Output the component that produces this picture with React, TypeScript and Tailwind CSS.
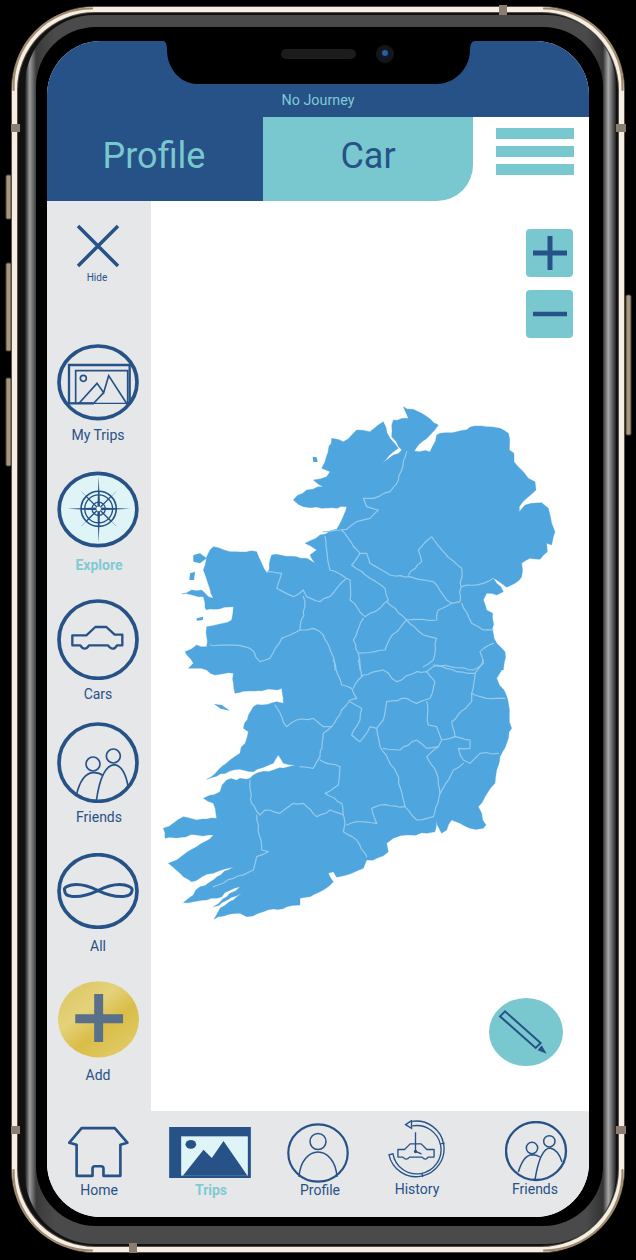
import React from "react";

const NAVY = "#265287";

type P = [number, number];

let seed = 7;
const rnd = () => {
  seed = (seed * 16807) % 2147483647;
  return seed / 2147483647 - 0.5;
};
const rough = (pts: P[], amp: number, step: number): P[] => {
  const out: P[] = [];
  for (let i = 0; i < pts.length; i++) {
    const a = pts[i];
    const b = pts[i + 1];
    out.push(a);
    if (!b) break;
    const len = Math.hypot(b[0] - a[0], b[1] - a[1]);
    const n = Math.floor(len / step);
    for (let k = 1; k < n; k++) {
      const t = k / n;
      out.push([a[0] + (b[0] - a[0]) * t + rnd() * amp, a[1] + (b[1] - a[1]) * t + rnd() * amp]);
    }
  }
  return out;
};
const dShift = (pts: P[], dy: number) => pts.map(([x, y]) => `${x.toFixed(1)} ${(y + dy).toFixed(1)}`);
const poly = (pts: P[], dy = 0, close = false) =>
  "M" + dShift(pts, dy).join(" L") + (close ? " Z" : "");

const outlineTop: P[] = [
  [760,20],[790,28],[815,40],[865,75],[840,105],[805,135],[793,153],[840,155],[860,105],[870,100],[920,95],[975,78],[1010,80],[1050,85],[1075,100],[1078,150],[1092,160],[1092,185],[1120,215],[1135,235],[1155,245],[1158,270],[1130,295],[1108,320],[1108,335],[1125,315],[1175,308],[1195,325],[1205,370],[1215,395],[1205,435],[1190,430],[1192,455],[1170,478],[1140,475],[1115,490],[1115,530],[1095,550],[1070,562],[1040,540],[1030,535],[1060,575],[1040,585],[1010,580],[1000,600],[1010,630],[1028,640],[1030,700],[1040,730],[1065,755],[1060,810],
];
const outlineBottom: P[] = [
  [1055,30],[1040,55],[1062,90],[1075,130],[1078,170],[1085,205],[1070,250],[1050,290],[1040,330],[1035,370],[1005,410],[985,440],[995,460],[1008,495],[1000,505],[960,505],[930,490],[905,480],[890,510],[875,520],[860,480],[855,515],[830,520],[770,525],[730,535],[710,550],[715,575],[680,595],[650,600],[640,625],[590,645],[560,652],[550,635],[535,640],[550,665],[520,690],[480,710],[450,715],[450,735],[410,740],[340,755],[290,770],[270,760],[205,770],[192,778],[210,745],[250,720],[275,700],[190,740],[240,700],[270,680],[200,715],[130,725],[100,728],[130,705],[150,680],[190,660],[250,620],[190,640],[125,665],[90,640],[55,610],[80,600],[100,585],[190,525],[140,525],[45,535],[40,505],[100,470],[140,480],[200,475],[190,430],[160,415],[210,395],[230,360],[300,355],[310,345],[370,330],[435,315],[400,310],[385,285],[370,310],[310,335],[250,330],[170,358],[240,300],[270,280],[295,215],[280,205],[310,140],[380,125],[400,130],[395,85],[255,100],[250,40],[195,45],[170,30],[115,25],[130,10],
];
const outlineTop2: P[] = [
  [105,755],[140,735],[170,740],[170,680],[245,660],[250,620],[190,628],[165,625],[160,590],[95,582],[125,570],[155,570],[175,590],[190,595],[160,510],[170,470],[180,450],[190,440],[240,455],[320,455],[335,490],[352,520],[365,465],[440,470],[470,475],[495,490],[480,465],[500,450],[465,430],[510,405],[560,388],[590,320],[515,325],[460,320],[430,300],[470,270],[520,260],[490,240],[530,230],[540,215],[515,205],[525,185],[545,115],[580,125],[620,90],[660,95],[700,65],[720,115],[745,145],[695,190],[730,165],[755,150],[725,110],[730,60],[775,55],
];
const outline = poly(
  rough([...outlineTop, ...outlineBottom.map(([x, y]): P => [x, y + 780]), ...outlineTop2], 7, 14),
  0,
  true,
);

const islands: P[][] = [
  [[130,465],[150,460],[170,475],[150,490],[130,485]],
  [[120,520],[135,515],[132,540],[118,540]],
  [[165,600],[192,598],[190,625],[168,630]],
  [[488,170],[500,172],[503,186],[490,186]],
  [[140,655],[160,650],[158,660],[140,662]],
  [[192,912],[215,915],[240,932],[212,926]],
];

const linesTop: P[][] = [
  [[770,155],[745,240],[720,275],[670,295],[640,295],[650,320],[685,330],[660,355],[620,365],[590,388],[570,390],[520,395]],
  [[575,390],[630,460],[605,495],[660,535],[705,565],[715,600],[690,625],[645,650],[600,600],[600,540],[575,525],[540,510],[525,410]],
  [[630,460],[650,460],[660,490],[720,525],[780,530],[850,545],[890,600],[905,610],[930,605],[935,505],[885,460],[845,410],[805,450],[815,485],[775,525]],
  [[935,560],[1000,550],[1030,535]],
  [[935,610],[965,670],[1000,690],[1030,690]],
  [[905,610],[865,630],[860,660],[770,660],[710,605]],
  [[770,660],[720,715],[705,750],[625,760],[610,720],[640,655]],
  [[770,660],[820,705],[860,715],[850,780],[820,800]],
  [[625,760],[630,810]],
  [[590,535],[540,590],[510,605],[470,590],[460,570],[430,590],[380,565],[395,520],[352,515]],
  [[460,590],[465,620],[450,690],[395,715],[360,775],[330,785],[300,745],[250,735],[180,735]],
  [[450,690],[490,685],[520,705],[550,770],[555,810]],
  [[1030,730],[990,755],[1000,790],[970,810],[900,800],[850,795]],
];
const linesBottom: P[][] = [
  [[550,0],[575,75],[605,85],[620,115],[600,120],[575,150],[545,200],[520,220],[510,290],[490,325],[450,320]],
  [[375,135],[410,200],[440,180],[490,175],[520,200],[545,200]],
  [[610,85],[625,60],[640,45],[700,30],[740,65],[800,35],[830,35],[855,65],[840,115],[800,130],[770,115],[710,125],[700,180],[680,205],[660,200],[630,245],[605,225],[630,180],[635,145],[600,125]],
  [[625,0],[635,50]],
  [[830,35],[860,15],[920,35],[975,40],[1000,0]],
  [[975,40],[965,100],[965,125],[905,185],[915,230],[875,240],[860,200],[835,195],[830,125]],
  [[965,100],[1010,115],[1065,115]],
  [[915,230],[960,240],[960,265],[925,265],[940,300],[960,310],[990,280],[1045,280]],
  [[680,205],[690,260],[740,340],[765,440],[800,480],[850,470],[870,400],[910,330],[940,310]],
  [[700,265],[750,270],[800,240],[830,265],[865,260],[875,240]],
  [[865,260],[830,290],[860,340],[870,400]],
  [[510,300],[570,320],[565,375],[525,400],[575,430],[585,490],[580,515],[620,540],[650,590]],
  [[300,360],[305,430],[330,465],[345,450],[390,460],[430,430],[460,430],[500,470],[540,450],[580,465]],
  [[320,465],[335,570],[355,575],[320,590],[310,630],[250,655],[190,680]],
  [[590,495],[620,485],[680,490],[665,445],[690,435],[765,440]],
];
const countyPaths = [
  ...linesTop.map((p) => poly(rough(p, 5, 14))),
  ...linesBottom.map((p) => poly(rough(p, 5, 14), 780)),
];

function IrelandMap() {
  return (
    <svg viewBox="0 0 1260 1590" width={420} height={530} className="absolute left-[-1px] top-[199px]">
      <path d={outline} fill="#4fa5dd" stroke="#4fa5dd" strokeWidth={1} strokeLinejoin="round" />
      {islands.map((p, i) => (
        <path key={i} d={poly(p, 0, true)} fill="#4fa5dd" />
      ))}
      <g fill="none" stroke="#95cbec" strokeWidth={3.6} strokeLinejoin="round" strokeLinecap="round">
        {countyPaths.map((d, i) => (
          <path key={i} d={d} />
        ))}
      </g>
    </svg>
  );
}

function PhoneFrame() {
  const marks: [number, number, number, number][] = [
    [11, 124, 9, 8], [616, 124, 10, 8], [11, 1126, 9, 8], [616, 1126, 10, 8], [499, 5, 8, 10], [129, 1243, 8, 10],
  ];
  const btns: [number, number, number, number][] = [
    [6, 175, 5, 44], [6, 263, 5, 88], [6, 378, 5, 88], [626, 295, 5, 140],
  ];
  return (
    <svg width={636} height={1260} viewBox="0 0 636 1260" className="absolute left-0 top-0">
      <defs>
        <linearGradient id="bandH" x1="0" y1="0" x2="1" y2="0">
          <stop offset="0" stopColor="#1a1a1a" />
          <stop offset="0.008" stopColor="#9a9a9a" />
          <stop offset="0.019" stopColor="#3a3a3a" />
          <stop offset="0.05" stopColor="#4a4a4a" />
          <stop offset="0.95" stopColor="#4a4a4a" />
          <stop offset="0.978" stopColor="#333333" />
          <stop offset="0.987" stopColor="#a8a8a8" />
          <stop offset="1" stopColor="#222222" />
        </linearGradient>
      </defs>
      {btns.map(([x, y, w, h], i) => (
        <rect key={i} x={x} y={y} width={w} height={h} rx={1.5} fill="#a8977f" stroke="#4a4136" strokeWidth={1} />
      ))}
      <rect x={11} y={6} width={614} height={1247} rx={84} fill="#5a4f42" />
      <rect x={14.5} y={9.5} width={607} height={1240} rx={80.5} fill="none" stroke="#f4eee4" strokeWidth={5} />
      <g fill="none" stroke="#a08a6e" strokeWidth={2.2} strokeLinecap="round">
        <path d="M13.5 90 A78 78 0 0 1 92 8.5" />
        <path d="M544 8.5 A78 78 0 0 1 622.5 90" />
        <path d="M622.5 1170 A78 78 0 0 1 544 1250.5" />
        <path d="M92 1250.5 A78 78 0 0 1 13.5 1170" />
      </g>
      <rect x={18} y={13} width={600} height={1233} rx={77} fill="#111" />
      <rect x={25} y={15} width={591} height={1229} rx={70} fill="url(#bandH)" />
      <rect x={36} y={27} width={567} height={1199} rx={60} fill="#000" />
      {marks.map(([x, y, w, h], i) => (
        <rect key={i} x={x} y={y} width={w} height={h} fill="#8b7d6f" />
      ))}
    </svg>
  );
}

function Notch() {
  return (
    <svg width={330} height={46} viewBox="0 0 330 46" className="absolute left-[106px] top-0">
      <path d="M10 0 Q14 0 14 9 C14 28 28 43 44 43 H284 C301 43 317 28 317 9 Q317 0 322 0 Z" fill="#000" />
      <rect x={128} y={8} width={75} height={10} rx={5} fill="#1c1c1c" />
      <circle cx={232} cy={13} r={9} fill="#14161c" />
      <circle cx={232} cy={13} r={5} fill="#0d1a2e" />
      <circle cx={232} cy={12} r={3} fill="#2c5c9a" />
    </svg>
  );
}

const thin = { fill: "none", stroke: NAVY };

function MyTripsIcon() {
  return (
    <svg width={82} height={77} viewBox="52 42 246 231">
      <ellipse cx={175} cy={157} rx={117} ry={109} {...thin} strokeWidth={11} />
      <g {...thin} strokeWidth={5}>
        <path d="M88 222 V105 H270 V222" strokeWidth={7} />
        <path d="M108 222 V122 H264 V222" />
        <circle cx={131} cy={145} r={9} />
        <path d="M116 222 L172 160 L192 188 L207 137 L262 222" />
        <path d="M160 222 L192 188" />
        <path d="M90 220 H162" strokeWidth={7} />
        <path d="M100 220 H270" strokeWidth={4} />
      </g>
    </svg>
  );
}

function ExploreIcon() {
  const spokes = [0, 45, 90, 135];
  return (
    <svg width={82} height={77} viewBox="52 424 246 232">
      <ellipse cx={175} cy={540} rx={117} ry={109} fill="#dff4f6" stroke={NAVY} strokeWidth={11} />
      <g fill={NAVY}>
        <path d="M177 440 L181 534 L272 538 L181 542 L177 640 L173 542 L82 538 L173 534 Z" />
      </g>
      <g stroke="#7c9fc0" strokeWidth={2}>
        <path d="M125 486 L230 590 M230 486 L125 590" />
      </g>
      <g {...thin} strokeWidth={4}>
        <circle cx={177} cy={538} r={53} strokeWidth={5} />
        <circle cx={177} cy={538} r={42} />
        <circle cx={177} cy={538} r={20} />
        {spokes.map((a) => (
          <path key={a} d="M177 485 V591" transform={`rotate(${a} 177 538)`} />
        ))}
      </g>
      <circle cx={177} cy={538} r={7} fill="#fff" />
    </svg>
  );
}

function CarsIcon() {
  return (
    <svg width={82} height={81} viewBox="52 806 246 243">
      <ellipse cx={175} cy={928} rx={117} ry={116} {...thin} strokeWidth={11} />
      <path d="M98 945 V915 H140 L167 890 H200 L225 913 H248 V945 H232 Q220 965 205 945 H148 Q135 965 122 945 Z" {...thin} strokeWidth={7} strokeLinejoin="round" />
    </svg>
  );
}

function FriendsBig() {
  return (
    <svg width={82} height={81} viewBox="52 35 246 243">
      <ellipse cx={175} cy={157} rx={117} ry={116} {...thin} strokeWidth={11} />
      <g {...thin} strokeWidth={5}>
        <circle cx={160} cy={161} r={21} />
        <circle cx={221} cy={137} r={21} />
        <path d="M110 255 Q125 190 160 187 Q178 186 190 196" />
        <path d="M170 272 Q185 165 225 163 Q255 168 266 232" />
      </g>
    </svg>
  );
}

function AllIcon() {
  return (
    <svg width={82} height={76} viewBox="52 428 246 228">
      <ellipse cx={175} cy={542} rx={117} ry={109} {...thin} strokeWidth={11} />
      <path d="M175 541 Q130 518 95 524 Q70 530 75 541 Q75 555 95 558 Q130 562 175 541 Q220 518 255 524 Q280 530 277 541 Q275 555 255 558 Q220 562 175 541 Z" {...thin} strokeWidth={9} />
    </svg>
  );
}

function AddIcon() {
  return (
    <svg width={81} height={77} viewBox="53 813 244 231">
      <defs>
        <linearGradient id="addGold" x1="0.1" y1="0" x2="0.9" y2="1">
          <stop offset="0" stopColor="#dcc660" />
          <stop offset="0.35" stopColor="#e4d27a" />
          <stop offset="0.6" stopColor="#dabd48" />
          <stop offset="1" stopColor="#e2ce6e" />
        </linearGradient>
      </defs>
      <ellipse cx={175} cy={928} rx={122} ry={115} fill="url(#addGold)" />
      <path d="M162 852 H189 V913 H249 V940 H189 V996 H162 V940 H105 V913 H162 Z" fill="#5a6f89" />
    </svg>
  );
}

function HomeIcon() {
  return (
    <svg width={61} height={52} viewBox="84 80 184 156" className="mr-[2px]">
      <path d="M88 130 L125 86 H225 L263 130 L242 136 V230 H191 V208 Q191 201 184 201 H165 Q158 201 158 208 V230 H110 V136 Z" {...thin} strokeWidth={8} strokeLinejoin="round" />
    </svg>
  );
}

function TripsIcon() {
  return (
    <svg width={82} height={51} viewBox="387 82 245 153" className="mr-[2px]">
      <rect x={387} y={82} width={245} height={153} fill={NAVY} />
      <rect x={423} y={110} width={200} height={118} fill="#dff4f6" />
      <ellipse cx={452} cy={134} rx={16} ry={13} fill={NAVY} />
      <path d="M428 228 L490 150 L515 175 L550 124 L622 228 Z" fill={NAVY} />
    </svg>
  );
}

function ProfileIcon() {
  return (
    <svg width={62} height={60} viewBox="0 0 62 60" className="mb-[-3px] mr-[4px]">
      <ellipse cx={31} cy={30} rx={29.7} ry={28.7} {...thin} strokeWidth={2.2} />
      <circle cx={31} cy={18.5} r={8} {...thin} strokeWidth={1.5} />
      <path d="M12 54 C13 38 22 29 31 29 C40 29 49 38 50 54" {...thin} strokeWidth={1.5} />
    </svg>
  );
}

function HistoryIcon() {
  return (
    <svg width={58} height={58} viewBox="145 418 175 175" className="mb-px">
      <g {...thin} strokeWidth={4}>
        <path d="M218 422 A84 84 0 1 1 148 523 L160 520 A73 73 0 1 0 218 436" />
        <path d="M303 490 L316 488 M247 578 L250 590" />
        <path d="M175 530 V507 H195 L212 490 H245 L262 507 H284 V530 H266 Q258 542 248 530 H210 Q200 542 190 530 Z" strokeLinejoin="round" />
        <path d="M228 455 V513" />
        <path d="M228 513 L246 520" />
      </g>
      <path d="M198 432 L216 420 L216 443 Z" fill="#e6e7e9" stroke={NAVY} strokeWidth={4} />
      <circle cx={228} cy={513} r={5} fill={NAVY} />
    </svg>
  );
}

function FriendsSmall() {
  return (
    <svg width={63} height={61} viewBox="495 422 189 183" className="mb-[-3px] ml-[2px]">
      <ellipse cx={588} cy={512} rx={90} ry={87} {...thin} strokeWidth={7} />
      <g {...thin} strokeWidth={4.5}>
        <circle cx={576} cy={503} r={17} />
        <circle cx={628} cy={483} r={17} />
        <path d="M535 575 Q550 525 575 523 Q590 523 600 530" />
        <path d="M585 598 Q600 505 630 503 Q655 508 666 545" />
      </g>
    </svg>
  );
}

function PencilIcon() {
  return (
    <svg width={74} height={69} viewBox="447 55 222 207" className="absolute left-[338px] top-[797px]">
      <ellipse cx={558} cy={157} rx={111} ry={102} fill="#79c8cf" />
      <path d="M495 95 L480 110 L587 205 L602 190 Z" {...thin} strokeWidth={6} />
      <path d="M605 197 L620 222 L593 212 Z" fill={NAVY} />
    </svg>
  );
}

function SideItem({ icon, label, active, className }: { icon: React.ReactNode; label: string; active?: boolean; className: string }) {
  return (
    <div className="flex flex-col items-center">
      {icon}
      <div className={`${className} text-[14px] leading-5 ${active ? "font-bold text-[#7fcbd3]" : "text-[#265287]"}`}>{label}</div>
    </div>
  );
}

function NavItem({ icon, label, active, className }: { icon: React.ReactNode; label: string; active?: boolean; className: string }) {
  return (
    <div className={`flex flex-col items-center justify-end ${className}`}>
      {icon}
      <div className={`text-[14px] leading-5 ${active ? "font-bold text-[#7fcbd3]" : "text-[#265287]"}`}>{label}</div>
    </div>
  );
}

export default function App() {
  return (
    <div className="relative h-[1260px] w-[636px] overflow-hidden bg-black font-['Roboto',sans-serif]">
      <PhoneFrame />
      <div className="relative ml-[47px] w-[542px] pt-[41px]">
        <div className="relative flex h-[1176px] flex-col overflow-hidden rounded-[54px] bg-white">
          <div className="flex h-[76px] items-end justify-center bg-[#265287] pb-[7px]">
            <span className="text-[14.3px] leading-5 text-[#7fcbd3]">No Journey</span>
          </div>
          <div className="flex h-[84px]">
            <div className="flex w-[216px] items-center justify-center bg-[#265287] pb-[6px] pr-[2px] text-[36px] text-[#79c8cf]">Profile</div>
            <div className="flex w-[210px] items-center justify-center rounded-br-[36px] bg-[#79c8cf] pb-[6px] text-[36px] text-[#265287]">Car</div>
            <div className="ml-[23px] mt-[11px] flex w-[78px] flex-col gap-[7px]">
              <div className="h-[11px] bg-[#79c8cf]" />
              <div className="h-[11px] bg-[#79c8cf]" />
              <div className="h-[11px] bg-[#79c8cf]" />
            </div>
          </div>
          <div className="flex h-[910px]">
            <div className="flex w-[104px] flex-col bg-[#e6e7e9] pr-[2px] pt-[23px]">
              <div className="flex flex-col items-center">
                <svg width={44} height={44} viewBox="0 0 44 44">
                  <path d="M2 2 L42 42 M42 2 L2 42" stroke={NAVY} strokeWidth={3.5} />
                </svg>
                <div className="mr-[2px] mt-[3px] text-[10px] leading-[14px] text-[#265287]">Hide</div>
              </div>
              <div className="mt-[59px]">
                <SideItem icon={<MyTripsIcon />} label="My Trips" className="mt-[4px]" />
              </div>
              <div className="mt-[26px]">
                <SideItem icon={<ExploreIcon />} label="Explore" active className="ml-[2px] mt-[7px]" />
              </div>
              <div className="mt-[24px]">
                <SideItem icon={<CarsIcon />} label="Cars" className="mt-[4px]" />
              </div>
              <div className="mt-[18px]">
                <SideItem icon={<FriendsBig />} label="Friends" className="ml-[2px] mt-[4px]" />
              </div>
              <div className="mt-[26px]">
                <SideItem icon={<AllIcon />} label="All" className="mt-[7px]" />
              </div>
              <div className="mt-[25px]">
                <SideItem icon={<AddIcon />} label="Add" className="mt-[7px]" />
              </div>
            </div>
            <div className="relative flex-1">
              <IrelandMap />
              <div className="absolute right-[16px] top-[28px] flex flex-col gap-[13px]">
                <div className="flex h-[48px] w-[47px] items-center justify-center rounded-[4px] bg-[#79c8cf]">
                  <svg width={34} height={34} viewBox="0 0 34 34">
                    <path d="M0 17 H34 M17 0 V34" stroke={NAVY} strokeWidth={5} />
                  </svg>
                </div>
                <div className="flex h-[48px] w-[47px] items-center justify-center rounded-[4px] bg-[#79c8cf]">
                  <svg width={34} height={6} viewBox="0 0 34 6">
                    <path d="M0 3 H34" stroke={NAVY} strokeWidth={4.5} />
                  </svg>
                </div>
              </div>
              <PencilIcon />
            </div>
          </div>
          <div className="flex h-[106px] bg-[#e6e7e9] pb-[17px]">
            <NavItem icon={<HomeIcon />} label="Home" className="w-[104px] gap-[2px]" />
            <NavItem icon={<TripsIcon />} label="Trips" active className="w-[120px] gap-[2px]" />
            <NavItem icon={<ProfileIcon />} label="Profile" className="w-[98px]" />
            <NavItem icon={<HistoryIcon />} label="History" className="mb-[1px] w-[96px]" />
            <NavItem icon={<FriendsSmall />} label="Friends" className="mb-[1px] w-[124px] pl-[16px]" />
          </div>
          <Notch />
        </div>
      </div>
    </div>
  );
}
